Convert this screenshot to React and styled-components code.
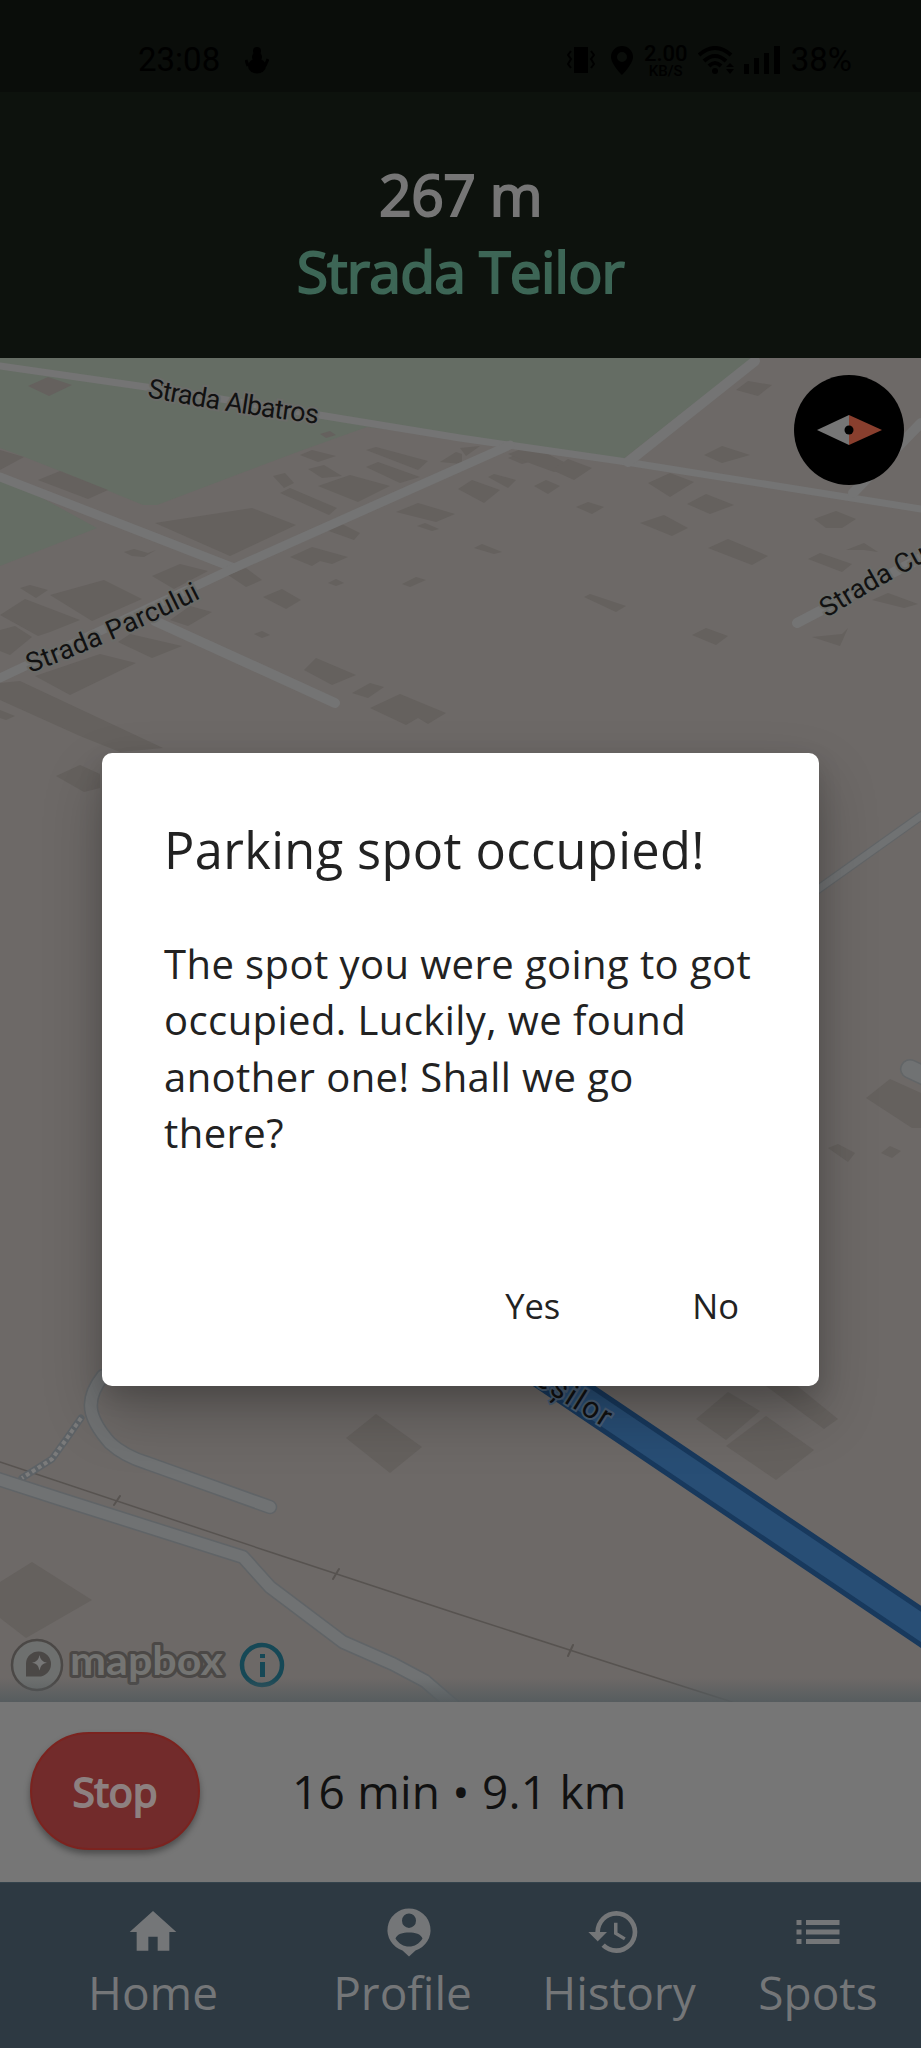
import React from "react";
import styled, { createGlobalStyle } from "styled-components";
import { MdHome, MdHistory } from "react-icons/md";

const GlobalStyle = createGlobalStyle`
  * { box-sizing: border-box; }
  body { margin: 0; background: #0d120d; }
  button { font: inherit; color: inherit; border: 0; background: none; padding: 0; }
`;

const Screen = styled.div`
  position: relative;
  width: 921px;
  height: 2048px;
  display: flex;
  flex-direction: column;
  overflow: hidden;
  font-family: "Open Sans", "Noto Sans", sans-serif;
  background: #0d120d;
`;

const StatusBar = styled.div`
  height: 92px;
  flex: none;
  padding: 29px 69px 0 138px;
  display: flex;
  justify-content: space-between;
  background: #0a0d0a;
  color: #000;
  font: 400 33px/62px Roboto, sans-serif;
`;

const StatusGroup = styled.div`
  display: flex;
  align-items: center;
  height: 62px;
  gap: ${(p) => p.$gap}px;
`;

const VibrateIcon = styled.svg`
  margin-right: 5px;
`;

const Speed = styled.div`
  width: 44px;
  text-align: center;
  font-weight: 500;
  font-size: 22px;
  line-height: 19px;
`;

const SpeedUnit = styled.div`
  font-size: 15px;
  line-height: 12px;
  margin-top: 2px;
`;

const Directions = styled.header`
  height: 266px;
  flex: none;
  padding-top: 64px;
  text-align: center;
  font-weight: 400;
  font-size: 57px;
  line-height: 77px;
  letter-spacing: -0.5px;
  color: #767676;
  -webkit-text-stroke: 2px currentColor;
`;

const StreetName = styled.div`
  color: #3d6656;
  letter-spacing: -0.8px;
`;

const MapArea = styled.main`
  position: relative;
  height: 1344px;
  flex: none;
  background: #6d6967;
`;

const MapSvg = styled.svg`
  display: block;
`;

const MapEdge = styled.div`
  position: absolute;
  inset: auto 0 0 0;
  height: 24px;
  background: linear-gradient(to bottom, rgba(84, 91, 94, 0), rgba(84, 91, 94, 0.9));
`;

const TripBar = styled.section`
  height: 180px;
  flex: none;
  display: flex;
  align-items: center;
  padding: 0 0 2px 30px;
  gap: 92px;
  background: #767676;
  color: #111;
  font-size: 46px;
  letter-spacing: 0.2px;
`;

const StopButton = styled.button`
  && {
    width: 170px;
    height: 118px;
    border: 2px solid #7b231f;
    border-radius: 59px;
    background: #722b2b;
    color: #8d8080;
    font-size: 40px;
    font-weight: 400;
    -webkit-text-stroke: 1.9px currentColor;
    box-shadow: 0 4px 6px rgba(0, 0, 0, 0.35);
  }
`;

const NavBar = styled.nav`
  flex: 1;
  display: flex;
  border-top: 1px solid #34434c;
  padding: 21px 0 0 51px;
  background: #2d3942;
  color: #747678;
`;

const NavItem = styled.div`
  width: ${(p) => p.$width}px;
  flex: none;
  display: flex;
  flex-direction: column;
  align-items: center;
  font-size: 46px;
  line-height: 64px;
  svg { width: 56px; height: 56px; margin-left: ${(p) => p.$shift || 0}px; }
`;

const Dialog = styled.div`
  position: absolute;
  left: 102px;
  top: 753px;
  width: 717px;
  height: 633px;
  border-radius: 10px;
  background: #fff;
  color: #222;
  display: flex;
  flex-direction: column;
  padding: 62px 60px 50px 62px;
  box-shadow: 0 28px 60px rgba(0, 0, 0, 0.24), 0 10px 24px rgba(0, 0, 0, 0.13);
`;

const DialogTitle = styled.h2`
  margin: 0;
  font-weight: 400;
  font-size: 50.5px;
  line-height: 70px;
  letter-spacing: 0.4px;
  white-space: nowrap;
`;

const DialogText = styled.p`
  margin: 51px 0 0;
  font-size: 40px;
  line-height: 56.3px;
  letter-spacing: 0.42px;
  white-space: nowrap;
`;

const DialogActions = styled.div`
  margin-top: auto;
  padding-right: 20px;
  display: flex;
  justify-content: flex-end;
  gap: 132px;
  font-size: 34.5px;
  line-height: 60px;
`;

const buildings = [
  "28,28 48,19 72,27 49,38", "0,92 24,99 0,112", "38,122 60,113 108,132 88,141", "155,165 252,150 296,167 230,198",
  "152,218 180,206 208,213 174,231", "50,237 104,222 142,241 92,263", "20,230 30,227 48,232 36,240", "0,257 25,241 80,262 50,274 38,278",
  "0,272 15,268 32,279 10,297 0,293", "118,284 130,276 182,288 152,300", "35,318 100,296 136,305 70,337", "0,325 20,323 163,390 120,394 80,378 0,342",
  "170,262 190,248 212,254 188,268", "56,418 80,407 100,416 100,430 84,434", "0,352 15,358 6,362 0,360",
  "318,128 350,117 390,128 358,144", "280,135 290,130 337,150 329,157", "366,92 376,89 428,103 418,112",
  "366,109 378,104 420,119 400,125", "300,97 312,92 336,98 318,104", "308,111 324,107 342,118 322,120", "273,118 285,115 294,125 284,130",
  "320,76 330,73 336,77 326,80", "396,154 418,145 455,156 436,164", "417,168 425,165 439,171 432,173", "326,172 340,165 360,175 354,182",
  "290,199 312,189 348,199 332,206 320,203 312,208", "263,239 282,231 301,242 286,251", "228,217 246,210 262,222 246,229", "402,226 416,219 426,222 410,229",
  "124,194 134,191 148,195 156,192 144,199 132,198", "254,276 262,273 270,277 262,280", "328,225 336,221 344,225 336,228",
  "304,312 316,300 356,317 332,327", "352,335 370,325 384,329 368,340", "370,350 400,336 446,355 428,366 418,360 406,367",
  "440,104 456,94 462,96 462,106", "460,90 480,88 466,98", "466,130 476,126 486,132 476,136",
  "508,100 522,94 540,101 522,106", "508,96 532,87 552,98 572,108 554,114 532,106", "552,112 568,101 592,110 574,122",
  "534,128 546,122 560,128 548,136", "458,131 472,122 500,132 484,145",
  "488,119 494,116 516,122 508,130", "576,149 588,144 604,149 592,156", "648,125 670,115 694,124 670,139",
  "687,146 706,136 734,147 710,156", "640,165 664,157 688,170 672,178", "708,190 728,181 768,198 752,207", "736,32 748,23 772,27 758,38",
  "704,97 722,88 750,97 722,105", "584,239 590,236 626,248 616,254", "692,277 706,270 728,278 716,287", "814,161 836,153 856,161 842,170 826,170",
  "808,201 820,195 852,206 842,214", "846,192 864,185 878,194 864,192", "812,279 842,276 848,270 840,288", "872,242 888,235 918,246 904,250",
  "474,190 482,186 502,194 494,196", "866,740 890,721 921,735 921,770 912,770", "828,790 838,786 855,795 848,804", "881,795 890,788 901,793 892,800",
  "346,1080 376,1056 422,1089 390,1115", "696,1061 728,1034 760,1053 726,1082", "726,1088 766,1058 814,1092 776,1122",
  "758,1022 790,1022 838,1061 824,1071", "0,1224 32,1204 92,1242 26,1280 0,1260",
];

const MINOR_ROADS = "M103 1018C84 1042 88 1060 110 1085 122 1096 134 1101 147 1105L270 1149M-5 1120 60 1141 243 1199 270 1229 343 1284 393 1306 425 1323 455 1349";

function MapDrawing() {
  return (
    <MapSvg width="921" height="1344" viewBox="0 0 921 1344">
      <g fill="#656d64">
        <path d="M0 0H752L622 102 460 80 367 69 300 93 157 147 143 147 70 117 22 98 0 90Z" />
        <path d="M0 117 97 170 0 208Z" />
      </g>
      <g fill="#65615e">{buildings.map((p) => <polygon key={p} points={p} />)}</g>
      <g fill="none" stroke="#747474" strokeWidth="9" strokeLinecap="round">
        <path d="M0 8 160 31 460 80 620 103 921 151" strokeWidth="7" />
        <path d="M0 119 234 210" />
        <path d="M0 320 234 210 510 87" />
        <path d="M628 104 755 3" strokeWidth="10" />
        <path d="M155 263 335 345" strokeWidth="10" />
        <path d="M797 265 921 200" strokeWidth="10" />
        <path d="M853 135 921 65" strokeWidth="10" />
      </g>
      <g fill="none" strokeLinecap="round" strokeLinejoin="round">
        <path d="M810 537 921 458" stroke="#626567" strokeWidth="9" />
        <path d="M810 537 921 458" stroke="#707273" strokeWidth="7" />
        <path d="M910 711 940 725" stroke="#626567" strokeWidth="20" />
        <path d="M910 711 940 725" stroke="#707273" strokeWidth="17" />
        <path d="M0 1104 270 1194 455 1255 610 1305 732 1344" stroke="#575350" strokeWidth="1.5" />
        <path d="M114 1147 120 1138M333 1221 339 1211M568 1298 573 1287" stroke="#575350" strokeWidth="2" />
        <path d="M81 1060 65 1083 52 1101 22 1120" stroke="#5d6266" strokeWidth="7" />
        <path d="M81 1060 65 1083 52 1101 22 1120" stroke="#7b7b7b" strokeWidth="4" strokeDasharray="4 3" strokeLinecap="butt" />
        <path d={MINOR_ROADS} stroke="#606467" strokeWidth="14.5" />
        <path d={MINOR_ROADS} stroke="#707273" strokeWidth="11.5" />
        <path d="M510 991.500 942 1283" stroke="#18395d" strokeWidth="35" />
        <path d="M510 991.500 942 1283" stroke="#284e75" strokeWidth="25" />
      </g>
      <defs>
        <path id="albatros" d="M147 39Q230 55 321 66" />
        <path id="parcului" d="M30 315Q119 282 203 239" />
        <path id="curved" d="M827 260Q879 227 944 194" />
        <path id="route" d="M533 1025 616 1077" />
      </defs>
      <g fill="#111" stroke="#6b6c69" strokeWidth="4" paintOrder="stroke" fontFamily="Roboto, sans-serif" fontSize="27">
        <text><textPath href="#albatros" textLength="173">Strada Albatros</textPath></text>
        <text><textPath href="#parcului" textLength="187">Strada Parcului</textPath></text>
        <text><textPath href="#curved">Strada Cu</textPath></text>
        <text stroke="#4a5f75" fontSize="30"><textPath href="#route" textLength="84">eșilor</textPath></text>
      </g>
      <circle cx="849" cy="72" r="55" />
      <path d="M817 72 849 57V87Z" fill="#767676" />
      <path d="M882 72 849 57V87Z" fill="#893f2e" />
      <circle cx="849" cy="72" r="4.5" />
      <circle cx="37" cy="1307" r="25" fill="#6e706f" stroke="#4b4846" strokeWidth="2.5" />
      <path d="M26 1318.500V1305.500A12.5 12.5 0 1 1 38.500 1318.500Z" fill="#4b4846" />
      <path d="M39.500 1297Q40.500 1304 47 1304.700 40.500 1305.500 39.500 1312.500 38.500 1305.500 32 1304.700 38.500 1304 39.500 1297Z" fill="#777" />
      <text x="70" y="1317" textLength="153" lengthAdjust="spacingAndGlyphs" fontFamily="Lato, sans-serif" fontWeight="700" fontSize="41" fill="#747472" stroke="#4b4846" strokeWidth="6" strokeLinejoin="round" paintOrder="stroke">mapbox</text>
      <circle cx="262" cy="1307" r="20" fill="none" stroke="#164856" strokeWidth="4.500" />
      <path d="M260 1296h5v4h-5zM260 1304h5v15h-5z" fill="#164856" />
    </MapSvg>
  );
}

function PhoneStatus() {
  return (
    <StatusBar>
      <StatusGroup $gap={25}>
        <span>23:08</span>
        <svg width="24" height="28" viewBox="0 0 24 28">
          <circle cx="12" cy="5" r="4" />
          <circle cx="12" cy="11" r="5" />
          <ellipse cx="12" cy="20" rx="9" ry="7.500" />
          <path d="M3 20 1 14M20 20 23 13" stroke="#000" strokeWidth="3" />
        </svg>
      </StatusGroup>
      <StatusGroup $gap={10}>
        <VibrateIcon width="28" height="28" viewBox="0 0 28 28">
          <path d="M7 1h14v26H7z" />
          <path d="M4 5 1 9l3 4-3 5 3 4M24 5l3 4-3 4 3 5-3 4" fill="none" stroke="#000" strokeWidth="2" />
        </VibrateIcon>
        <svg width="24" height="29" viewBox="0 0 24 29"><path fillRule="evenodd" d="M12 0a11 11 0 0 1 11 11C23 18 12 29 12 29S1 18 1 11A11 11 0 0 1 12 0Zm0 6a5 5 0 1 0 0 10 5 5 0 0 0 0-10Z" /></svg>
        <Speed>
          <div>2.00</div>
          <SpeedUnit>KB/S</SpeedUnit>
        </Speed>
        <svg width="36" height="28" viewBox="0 0 36 28">
          <path d="M1 9Q17-5 33 9M6 15Q17 5 28 15M11 20Q17 14 23 20" fill="none" stroke="#000" strokeWidth="4" />
          <circle cx="17" cy="25" r="3" />
          <path d="m28 21 4-4 4 4zM28 23h8l-4 5z" />
        </svg>
        <svg width="37" height="28" viewBox="0 0 37 28"><path d="M0 18h5v10H0zM10 12h5v16h-5zM20 7h5v21h-5zM30 0h6v28h-6z" /></svg>
        <span>38%</span>
      </StatusGroup>
    </StatusBar>
  );
}

function ProfileIcon() {
  return (
    <svg viewBox="0 0 56 56" fill="currentColor">
      <path
        fillRule="evenodd"
        d="M28 4.500a21.500 21.500 0 0 1 6.500 42L28 52.500 21.500 46.500a21.500 21.500 0 0 1 6.500-42Zm0 5a7 7.200 0 1 0 0 14.400 7 7.200 0 0 0 0-14.400ZM14.500 34.500C18 40 22.500 42.500 28 42.500S38 40 41.500 34.500C40 30 34 28.500 28 28.500S16 30 14.500 34.500Z"
      />
    </svg>
  );
}

function ListIcon() {
  return (
    <svg viewBox="0 0 56 56" fill="currentColor">
      <path d="M6.500 16h5v5h-5zM6.500 25.500h5v5h-5zM6.500 35h5v5h-5zM16 16h33.500v5H16zM16 25.500h33.500v5H16zM16 35h33.500v5H16z" />
    </svg>
  );
}

const navItems = [
  { label: "Home", Icon: MdHome, width: 204 },
  { label: "Profile", Icon: ProfileIcon, width: 295, shift: 13 },
  { label: "History", Icon: MdHistory, width: 138, shift: -10 },
  { label: "Spots", Icon: ListIcon, width: 260 },
];

export default function App() {
  return (
    <>
      <GlobalStyle />
      <Screen>
        <PhoneStatus />
        <Directions>
          267 m
          <StreetName>Strada Teilor</StreetName>
        </Directions>
        <MapArea>
          <MapDrawing />
          <MapEdge />
        </MapArea>
        <TripBar>
          <StopButton>Stop</StopButton>
          <span>16 min • 9.1 km</span>
        </TripBar>
        <NavBar>
          {navItems.map(({ label, Icon, width, shift }) => (
            <NavItem key={label} $width={width} $shift={shift}>
              <Icon />
              <span>{label}</span>
            </NavItem>
          ))}
        </NavBar>
        <Dialog role="dialog">
          <DialogTitle>Parking spot occupied!</DialogTitle>
          <DialogText>
            The spot you were going to got<br />
            occupied. Luckily, we found<br />
            another one! Shall we go<br />
            there?
          </DialogText>
          <DialogActions>
            <button>Yes</button>
            <button>No</button>
          </DialogActions>
        </Dialog>
      </Screen>
    </>
  );
}
